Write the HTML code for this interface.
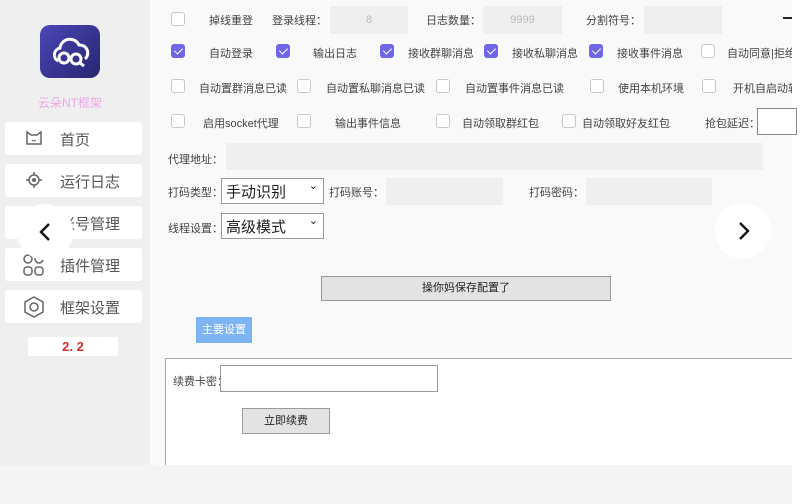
<!DOCTYPE html>
<html><head><meta charset="utf-8"><style>
*{margin:0;padding:0;box-sizing:border-box}
body{width:811px;height:504px;overflow:hidden;background:#f9f9f9;font-family:"Liberation Sans","Noto Sans CJK SC",sans-serif;position:relative;color:#444;font-size:11px}
.a{position:absolute;white-space:nowrap}
.cb{position:absolute;width:14px;height:14px;border:1px solid #c8c8c8;border-radius:3px;background:#fff}
.cb.on{background:#6f67e8;border-color:#6f67e8}
.cb.on::after{content:"";position:absolute;left:4px;top:1px;width:4px;height:7px;border:solid #fff;border-width:0 1.5px 1.5px 0;transform:rotate(45deg)}
.in{position:absolute;background:#efefef}
.menu{position:absolute;left:5px;width:137px;height:33px;background:#fff;border-radius:3px}
.menu span{position:absolute;left:55px;top:7px;font-size:15px;color:#555}
.sel{position:absolute;background:#fff;border:1px solid #999;font-size:15px;color:#222;padding:2px 4px}
.sel::after{content:"⌄";position:absolute;right:5px;top:0;font-size:11px}
.btn{position:absolute;background:#e3e3e3;border:1px solid #9a9a9a;text-align:center;font-size:11px;color:#222}
</style></head><body>
<div class="a" style="left:0;top:0;width:150px;height:504px;background:#efefef"></div>
<div class="a" style="left:0;top:465px;width:792px;height:39px;background:#f4f4f4"></div>
<div class="a" style="left:792px;top:0;width:19px;height:504px;background:#fff"></div>

<div class="a" style="left:40px;top:25px;width:60px;height:53px;border-radius:10px;background:linear-gradient(135deg,#4a46b8,#27266f)">
<svg width="60" height="53" viewBox="0 0 60 53"><path d="M18 36 a7 7 0 0 1 2-13 a10 10 0 0 1 19-3 a8 8 0 0 1 6 14" fill="none" stroke="#fff" stroke-width="3"/><circle cx="24" cy="33" r="5" fill="none" stroke="#fff" stroke-width="3"/><circle cx="36" cy="34" r="5" fill="none" stroke="#fff" stroke-width="3"/><path d="M40 38l4 3" stroke="#fff" stroke-width="3"/></svg></div>
<div class="a" style="left:38px;top:94px;font-size:12px;color:#eea6e6">云朵NT框架</div>

<div class="menu" style="top:122px"><svg class="a" style="left:20px;top:8px" width="18" height="17"><path d="M2 2l4 3h6l4-3v12h-14z" fill="none" stroke="#666" stroke-width="1.5"/><path d="M7 10q2 2 4 0" fill="none" stroke="#666"/></svg><span>首页</span></div>
<div class="menu" style="top:164px"><svg class="a" style="left:20px;top:7px" width="18" height="18"><circle cx="9" cy="9" r="5" fill="none" stroke="#666" stroke-width="1.5"/><circle cx="9" cy="9" r="2" fill="#666"/><path d="M9 1v3M9 14v3M1 9h3M14 9h3" stroke="#666" stroke-width="1.5"/></svg><span>运行日志</span></div>
<div class="menu" style="top:206px"><span>账号管理</span></div>
<div class="menu" style="top:248px"><svg class="a" style="left:18px;top:6px" width="22" height="22"><circle cx="5" cy="5" r="4" fill="none" stroke="#666" stroke-width="1.5"/><circle cx="16" cy="5" r="4" fill="none" stroke="#666" stroke-width="1.5"/><rect x="1" y="13" width="8" height="8" rx="3" fill="none" stroke="#666" stroke-width="1.5"/><rect x="12" y="13" width="8" height="8" rx="3" fill="none" stroke="#666" stroke-width="1.5"/></svg><span>插件管理</span></div>
<div class="menu" style="top:290px"><svg class="a" style="left:18px;top:6px" width="22" height="22"><path d="M11 1l9 5v10l-9 5-9-5v-10z" fill="none" stroke="#666" stroke-width="1.5"/><circle cx="11" cy="11" r="4" fill="none" stroke="#666" stroke-width="1.5"/></svg><span>框架设置</span></div>
<div class="a" style="left:28px;top:337px;width:90px;height:19px;background:#fff;text-align:center;color:#d03030;font-weight:bold;font-size:13px;line-height:19px">2. 2</div>
<div class="a" style="left:17px;top:204px;width:56px;height:56px;border-radius:50%;background:#fff"></div>
<svg class="a" style="left:36px;top:221px" width="18" height="22"><path d="M13 3l-8 8 8 8" fill="none" stroke="#111" stroke-width="2.4"/></svg>

<!-- row1 -->
<div class="cb" style="left:171px;top:12px"></div>
<div class="a" style="left:209px;top:12px">掉线重登</div>
<div class="a" style="left:272px;top:12px">登录线程：</div>
<div class="in" style="left:330px;top:6px;width:78px;height:28px;text-align:center;line-height:28px;color:#bbb">8</div>
<div class="a" style="left:426px;top:12px">日志数量：</div>
<div class="in" style="left:483px;top:6px;width:79px;height:28px;text-align:center;line-height:28px;color:#bbb">9999</div>
<div class="a" style="left:586px;top:12px">分割符号：</div>
<div class="in" style="left:644px;top:6px;width:78px;height:28px"></div>
<div class="a" style="left:783px;top:17px;width:9px;height:2px;background:#222"></div>
<!-- row2 -->
<div class="cb on" style="left:171px;top:44px"></div><div class="a" style="left:209px;top:45px">自动登录</div>
<div class="cb on" style="left:276px;top:44px"></div><div class="a" style="left:313px;top:45px">输出日志</div>
<div class="cb on" style="left:380px;top:44px"></div><div class="a" style="left:408px;top:45px">接收群聊消息</div>
<div class="cb on" style="left:484px;top:44px"></div><div class="a" style="left:512px;top:45px">接收私聊消息</div>
<div class="cb on" style="left:589px;top:44px"></div><div class="a" style="left:617px;top:45px">接收事件消息</div>
<div class="cb" style="left:701px;top:44px"></div><div class="a" style="left:727px;top:45px;width:65px;overflow:hidden">自动同意|拒绝</div>
<!-- row3 -->
<div class="cb" style="left:171px;top:79px"></div><div class="a" style="left:199px;top:80px">自动置群消息已读</div>
<div class="cb" style="left:297px;top:79px"></div><div class="a" style="left:326px;top:80px">自动置私聊消息已读</div>
<div class="cb" style="left:436px;top:79px"></div><div class="a" style="left:465px;top:80px">自动置事件消息已读</div>
<div class="cb" style="left:590px;top:79px"></div><div class="a" style="left:618px;top:80px">使用本机环境</div>
<div class="cb" style="left:702px;top:79px"></div><div class="a" style="left:733px;top:80px;width:59px;overflow:hidden">开机自启动软件</div>
<!-- row4 -->
<div class="cb" style="left:171px;top:114px"></div><div class="a" style="left:203px;top:115px">启用socket代理</div>
<div class="cb" style="left:297px;top:114px"></div><div class="a" style="left:335px;top:115px">输出事件信息</div>
<div class="cb" style="left:436px;top:114px"></div><div class="a" style="left:462px;top:115px">自动领取群红包</div>
<div class="cb" style="left:562px;top:114px"></div><div class="a" style="left:582px;top:115px">自动领取好友红包</div>
<div class="a" style="left:705px;top:115px">抢包延迟：</div>
<div class="a" style="left:757px;top:108px;width:40px;height:27px;background:#fff;border:1px solid #888"></div>

<div class="a" style="left:168px;top:151px">代理地址：</div>
<div class="in" style="left:226px;top:143px;width:537px;height:27px"></div>
<div class="a" style="left:168px;top:184px">打码类型：</div>
<div class="sel" style="left:221px;top:178px;width:103px;height:26px">手动识别</div>
<div class="a" style="left:329px;top:184px">打码账号：</div>
<div class="in" style="left:386px;top:178px;width:117px;height:27px"></div>
<div class="a" style="left:529px;top:184px">打码密码：</div>
<div class="in" style="left:586px;top:178px;width:126px;height:27px"></div>
<div class="a" style="left:168px;top:220px">线程设置：</div>
<div class="sel" style="left:221px;top:213px;width:103px;height:26px">高级模式</div>
<div class="a" style="left:715px;top:203px;width:56px;height:56px;border-radius:50%;background:#fff"></div>
<svg class="a" style="left:735px;top:220px" width="18" height="22"><path d="M5 3l8 8-8 8" fill="none" stroke="#111" stroke-width="2.4"/></svg>

<div class="btn" style="left:321px;top:276px;width:290px;height:25px;line-height:23px">操你妈保存配置了</div>
<div class="a" style="left:196px;top:317px;width:56px;height:26px;background:#7db4f4;color:#fff;text-align:center;line-height:26px">主要设置</div>

<div class="a" style="left:165px;top:358px;width:627px;height:107px;background:#fff;border:1px solid #aaa;border-right:none;border-bottom:none"></div>
<div class="a" style="left:173px;top:373px">续费卡密：</div>
<div class="a" style="left:220px;top:365px;width:218px;height:27px;background:#fff;border:1px solid #999"></div>
<div class="btn" style="left:242px;top:408px;width:88px;height:26px;line-height:24px">立即续费</div>
</body></html>
